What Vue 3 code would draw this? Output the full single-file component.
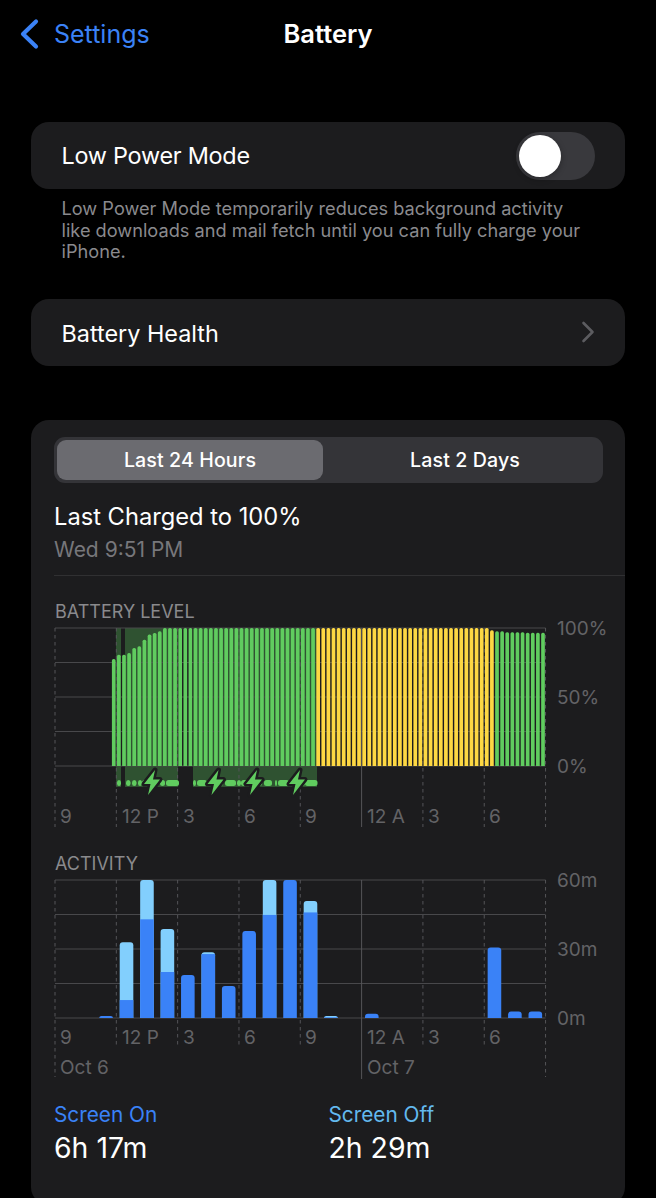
<script setup>
const LEFT = 1
const TOP = 6
const BOTTOM = 144
const HEIGHT = BOTTOM - TOP
const HOUR = 20.44
const SLOT = HOUR / 4

const ticks = [0, 1, 2, 3, 4, 5, 6, 7, 8].map(i => LEFT + i * HOUR * 3)
const rows = [0, 1, 2, 3, 4].map(i => TOP + (i * HEIGHT) / 4)
const timeLabels = [
  { text: '9', x: 6 },
  { text: '12 P', x: 68 },
  { text: '3', x: 129 },
  { text: '6', x: 190 },
  { text: '9', x: 251 },
  { text: '12 A', x: 313 },
  { text: '3', x: 374 },
  { text: '6', x: 435 }
]

// battery level per 15 min slot, starts at slot 11
const rise = [77.5, 80.6, 80.6, 81.8, 85.5, 86.7, 91.5, 95.2, 96.4, 97.6]
const tail = [98.3, 97.6, 97.6, 97, 97, 97, 97, 96.5, 96.5, 96.5, 96.5]

const levelBars = []
for (let i = 11; i < 96; i++) {
  let level = 100
  if (i - 11 < rise.length) level = rise[i - 11]
  if (i >= 85) level = tail[i - 85]
  const h = (level / 100) * HEIGHT
  levelBars.push({
    x: LEFT + i * SLOT + 0.7,
    y: BOTTOM - h,
    h,
    color: i >= 51 && i < 86 ? '#fdd843' : '#60cc5f'
  })
}

const charging = [
  [116, 121],
  [125, 178],
  [193, 317]
]
const pills = [
  [117, 121], [126, 130.5], [132, 136.5], [138, 142], [142, 156], [160, 165], [166, 179],
  [193, 196], [197, 207], [207, 223], [225, 236], [237, 241], [241, 262], [264, 272],
  [275, 277], [278, 289], [289, 305], [305, 317.5]
]
const bolts = [152, 215.5, 254, 297]

// minutes per hour: [screen on, screen off]
const activity = [
  [2, 0.9, 0], [3, 7.8, 25.1], [4, 42.9, 17.1], [5, 20, 18.7], [6, 18.7, 0], [7, 27.8, 0.8],
  [8, 13.9, 0], [9, 37.8, 0], [10, 44.8, 15.2], [11, 60, 0], [12, 45.9, 5], [13, 0.3, 0.6],
  [15, 1.9, 0], [21, 30.7, 0], [22, 2.8, 0], [23, 2.8, 0]
]

const toY = m => (m / 60) * HEIGHT

// rounded on top only
const topRound = (x, y, w, h, r) => {
  const c = Math.min(r, h)
  return `M${x} ${y + h}V${y + c}Q${x} ${y} ${x + c} ${y}H${x + w - c}Q${x + w} ${y} ${x + w} ${y + c}V${y + h}Z`
}

const activityBars = activity.map(([hour, on, off]) => {
  const x = LEFT + hour * HOUR + 3.4
  const onH = toY(on)
  const offH = toY(off)
  const total = onH + offH
  return {
    hour,
    whole: topRound(x, BOTTOM - total, 13.6, total, 3),
    wholeColor: off > 0 ? '#82cffd' : '#3a82f7',
    lower: off > 0 ? { x, y: BOTTOM - onH, h: onH } : null
  }
})
</script>

<template>
  <div class="page">
    <header class="nav">
      <div class="back">
        <svg width="20" height="32" viewBox="0 0 20 32">
          <path d="M17 3.5 L4 16 L17 28.5" fill="none" stroke="#3b82f6" stroke-width="4.2" stroke-linecap="round" stroke-linejoin="round" />
        </svg>
        <span>Settings</span>
      </div>
      <div class="nav-title">Battery</div>
      <div></div>
    </header>

    <section class="row-card first">
      <span class="row-label low-power">Low Power Mode</span>
      <div class="toggle"><div class="knob"></div></div>
    </section>
    <p class="note">
      Low Power Mode temporarily reduces background activity<br />
      like downloads and mail fetch until you can fully charge your<br />
      iPhone.
    </p>

    <section class="row-card health">
      <span class="row-label">Battery Health</span>
      <svg width="14" height="22" viewBox="0 0 14 22">
        <path d="M2.5 2 L11.5 11 L2.5 20" fill="none" stroke="#5c5c60" stroke-width="2.6" stroke-linecap="round" stroke-linejoin="round" />
      </svg>
    </section>

    <section class="usage">
      <div class="segments">
        <div class="segment active">Last 24 Hours</div>
        <div class="segment other">Last 2 Days</div>
      </div>

      <div class="charged">Last Charged to 100%</div>
      <div class="charged-time">Wed 9:51 PM</div>
      <div class="divider"></div>

      <div class="chart-title level-title">BATTERY LEVEL</div>
      <svg class="chart" width="571" height="208">
        <rect v-for="s in charging" :key="s[0]" :x="s[0] - 54" :y="TOP" :width="s[1] - s[0]" :height="787 - 622 - TOP" fill="#2f5231" />
        <line v-for="y in rows" :key="y" :x1="LEFT" :x2="ticks[8]" :y1="y" :y2="y" class="grid" />
        <line v-for="(x, i) in ticks" :key="x" :x1="x" :x2="x" :y1="TOP" y2="205" :class="i === 5 ? 'solid' : 'dash'" />
        <path v-for="b in levelBars" :key="b.x" :d="topRound(b.x, b.y, 3.7, b.h, 1.6)" :fill="b.color" />
        <rect v-for="p in pills" :key="p[0]" :x="p[0] - 54" y="158" :width="p[1] - p[0]" height="6" rx="2.5" fill="#60cc5f" />
        <path
          v-for="x in bolts"
          :key="x"
          :transform="`translate(${x - 54 - 8} 148)`"
          d="M11 0 L0 14 L6.5 14 L4 25 L16 9.5 L9 9.5 Z"
          fill="#60cc5f"
          stroke="#1c1c1e"
          stroke-width="5"
          stroke-linejoin="round"
          paint-order="stroke"
        />
        <text x="503" :y="rows[0]" class="axis">100%</text>
        <text x="503" :y="rows[2]" class="axis">50%</text>
        <text x="503" :y="rows[4]" class="axis">0%</text>
        <text v-for="t in timeLabels" :key="t.x" :x="t.x" y="194" class="axis">{{ t.text }}</text>
      </svg>

      <div class="chart-title activity-title">ACTIVITY</div>
      <svg class="chart" width="571" height="206">
        <line v-for="y in rows" :key="y" :x1="LEFT" :x2="ticks[8]" :y1="y" :y2="y" class="grid" />
        <line
          v-for="(x, i) in ticks"
          :key="x"
          :x1="x"
          :x2="x"
          :y1="TOP"
          :y2="i === 5 ? 205 : i === 0 || i === 8 ? 203 : 171"
          :class="i === 5 ? 'solid' : 'dash'"
        />
        <g v-for="b in activityBars" :key="b.hour">
          <path :d="b.whole" :fill="b.wholeColor" />
          <rect v-if="b.lower" :x="b.lower.x" :y="b.lower.y" width="13.6" :height="b.lower.h" fill="#3a82f7" />
        </g>
        <text x="503" :y="rows[0]" class="axis">60m</text>
        <text x="503" :y="rows[2]" class="axis">30m</text>
        <text x="503" :y="rows[4]" class="axis">0m</text>
        <text v-for="t in timeLabels" :key="t.x" :x="t.x" y="163" class="axis">{{ t.text }}</text>
        <text x="6" y="193" class="axis">Oct 6</text>
        <text x="313" y="193" class="axis">Oct 7</text>
      </svg>

      <div class="stats">
        <div class="stat">
          <div class="stat-label on">Screen On</div>
          <div class="stat-value">6h 17m</div>
        </div>
        <div class="stat">
          <div class="stat-label off">Screen Off</div>
          <div class="stat-value">2h 29m</div>
        </div>
      </div>
    </section>
  </div>
</template>

<style scoped>
.page {
  height: 1198px;
  overflow: hidden;
  background: #000;
  color: #fff;
  font-family: Inter, "Liberation Sans", sans-serif;
}
.nav {
  height: 68px;
  display: grid;
  grid-template-columns: 1fr auto 1fr;
  align-items: center;
}
.back {
  display: flex;
  align-items: center;
  gap: 15px;
  padding-left: 19px;
  color: #3b82f6;
  font-size: 25px;
}
.nav-title {
  padding-bottom: 2px;
  font-size: 25.5px;
  font-weight: 600;
}
.row-card {
  height: 67px;
  margin: 0 31px;
  padding: 0 30px 0 30.5px;
  display: flex;
  align-items: center;
  justify-content: space-between;
  background: #1c1c1e;
  border-radius: 18px;
  font-size: 23.4px;
}
.row-label {
  padding-top: 2px;
}
.low-power {
  padding-top: 0;
  letter-spacing: -0.25px;
}
.first {
  margin-top: 54px;
}
.toggle {
  width: 79px;
  height: 48px;
  padding: 3px;
  box-sizing: border-box;
  background: #39393d;
  border-radius: 24px;
}
.knob {
  width: 42px;
  height: 42px;
  background: #fff;
  border-radius: 50%;
  box-shadow: 0 2px 6px rgba(0, 0, 0, 0.3);
}
.note {
  margin: 9px 31px 0 61.5px;
  color: #8a8a8e;
  font-size: 18.2px;
  line-height: 21.5px;
  white-space: nowrap;
}
.health {
  margin-top: 36px;
  padding-right: 30px;
}
.usage {
  margin: 54px 31px 0;
  padding: 17px 0 40px 23px;
  background: #1c1c1e;
  border-radius: 18px;
}
.segments {
  width: 549px;
  height: 46px;
  padding: 3px;
  box-sizing: border-box;
  display: grid;
  grid-template-columns: 266px 1fr;
  background: #343438;
  border-radius: 11px;
}
.segment {
  display: flex;
  align-items: center;
  justify-content: center;
  font-size: 19.6px;
  font-weight: 500;
  letter-spacing: 0.1px;
  border-radius: 9px;
}
.active {
  background: #6b6b70;
}
.other {
  padding-left: 7px;
}
.charged {
  margin-top: 20px;
  font-size: 23.7px;
  line-height: 28px;
}
.charged-time {
  margin-top: 6px;
  color: #77777b;
  font-size: 21px;
  line-height: 26px;
}
.divider {
  margin-top: 12px;
  height: 1px;
  background: #303032;
}
.chart-title {
  margin-left: 1px;
  color: #8a8a8d;
  font-size: 18px;
  line-height: 21px;
}
.level-title {
  margin-top: 25px;
}
.activity-title {
  margin-top: 23px;
}
.chart {
  display: block;
  overflow: visible;
}
.grid {
  stroke: #48484b;
  stroke-width: 1.2;
}
.dash {
  stroke: #545458;
  stroke-width: 1;
  stroke-dasharray: 3.5 3.5;
}
.solid {
  stroke: #545458;
  stroke-width: 1;
}
.axis {
  fill: #636366;
  font-size: 19px;
  dominant-baseline: central;
}
.stats {
  margin-top: 23px;
  display: grid;
  grid-template-columns: 274.5px 1fr;
}
.stat-label {
  font-size: 20.8px;
  line-height: 24px;
}
.on {
  color: #3a82f7;
}
.off {
  color: #63b9ee;
}
.stat-value {
  margin-top: 4px;
  font-size: 28.4px;
  line-height: 34px;
}
</style>

<style>
html,
body {
  background: #000;
  overflow: hidden;
}
</style>
